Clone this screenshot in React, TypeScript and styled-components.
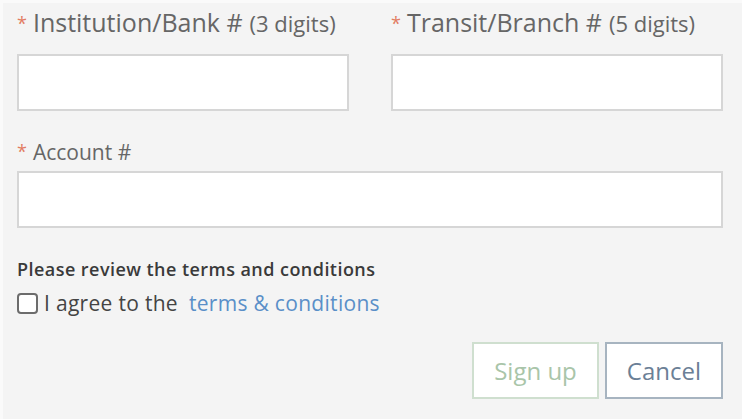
import React, { useState } from 'react'
import styled, { createGlobalStyle } from 'styled-components'

const GlobalStyle = createGlobalStyle`
html, body {
    margin:0;
    padding:0;
    background-color:#f4f4f4;
}
body {
    font-family:"Open Sans", "Noto Sans", sans-serif;
}
`

const StyledPage = styled.div`
width:742px;
height:419px;
box-sizing:border-box;
background-color:#f4f4f4;
border-top:3px solid #fafafa;
border-left:3px solid #fafafa;
padding:4px 19px 0 14px;
`

const StyledRow = styled.div`
display:grid;
grid-template-columns:1fr 1fr;
column-gap:42px;
`

const StyledField = styled.div`
display:flex;
flex-direction:column;
`

const StyledLabel = styled.label<{ $size: number }>`
display:flex;
align-items:baseline;
font-size:${props => props.$size}px;
line-height:30px;
color:#666666;
margin-bottom:${props => props.$size > 22 ? 14 : 3}px;
white-space:nowrap;
`

const StyledStar = styled.span`
color:#e27c62;
font-size:18px;
margin-right:6px;
position:relative;
top:-2px;
`

const StyledHint = styled.span`
font-size:22px;
margin-left:7px;
`

const StyledInput = styled.input`
box-sizing:border-box;
height:57px;
width:100%;
border:2px solid #d6d6d6;
background-color:#ffffff;
outline:none;
font-family:inherit;
font-size:18px;
padding:0 12px;
`

const StyledAccount = styled(StyledField)`
margin-top:26px;
`

const StyledTerms = styled.div`
margin-top:29px;
font-size:18px;
font-weight:600;
letter-spacing:0.45px;
color:#3a3a3a;
line-height:24px;
`

const StyledAgree = styled.label`
display:flex;
align-items:center;
margin-top:9px;
font-size:21px;
letter-spacing:0.3px;
color:#444444;
line-height:26px;
`

const StyledCheckbox = styled.input`
appearance:none;
width:21px;
height:21px;
margin:0 6px 0 0;
border:2px solid #6c6c6c;
border-radius:4px;
background-color:#ffffff;
box-sizing:border-box;
`

const StyledLink = styled.a`
color:#5a8fc8;
text-decoration:none;
margin-left:11px;
`

const StyledActions = styled.div`
display:flex;
justify-content:flex-end;
gap:6px;
margin-top:26px;
`

const StyledButton = styled.button<{ $variant: 'primary' | 'default' }>`
height:57px;
padding:0 20px;
background-color:#ffffff;
font-family:inherit;
font-size:24px;
border:2px solid ${props => props.$variant === 'primary' ? '#cfdfcf' : '#a7b4c0'};
color:${props => props.$variant === 'primary' ? '#a9c5a9' : '#6b8096'};
cursor:pointer;
`

const App = () => {
    const [agreed, setAgreed] = useState(false)

    return (
        <>
            <GlobalStyle />
            <StyledPage>
                <StyledRow>
                    <StyledField>
                        <StyledLabel $size={25}>
                            <StyledStar>*</StyledStar>Institution/Bank #<StyledHint>(3 digits)</StyledHint>
                        </StyledLabel>
                        <StyledInput />
                    </StyledField>
                    <StyledField>
                        <StyledLabel $size={25}>
                            <StyledStar>*</StyledStar>Transit/Branch #<StyledHint>(5 digits)</StyledHint>
                        </StyledLabel>
                        <StyledInput />
                    </StyledField>
                </StyledRow>
                <StyledAccount>
                    <StyledLabel $size={21}>
                        <StyledStar>*</StyledStar>Account #
                    </StyledLabel>
                    <StyledInput />
                </StyledAccount>
                <StyledTerms>Please review the terms and conditions</StyledTerms>
                <StyledAgree>
                    <StyledCheckbox type="checkbox" checked={agreed} onChange={e => setAgreed(e.target.checked)} />
                    I agree to the
                    <StyledLink href="#">terms &amp; conditions</StyledLink>
                </StyledAgree>
                <StyledActions>
                    <StyledButton $variant="primary" disabled={!agreed}>Sign up</StyledButton>
                    <StyledButton $variant="default">Cancel</StyledButton>
                </StyledActions>
            </StyledPage>
        </>
    )
}

export default App
